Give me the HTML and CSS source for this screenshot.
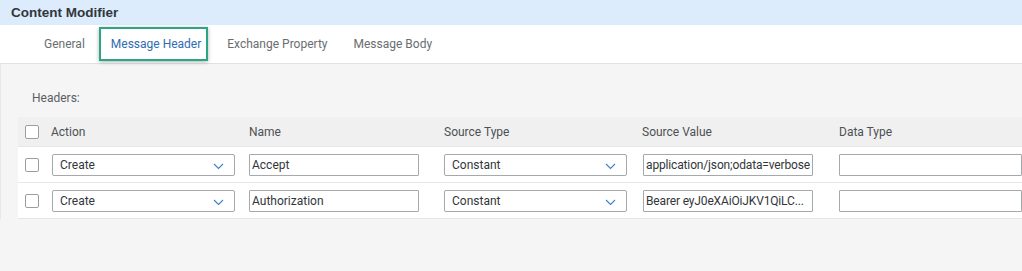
FILE: index.html
```html
<!DOCTYPE html>
<html lang="en">
<head>
    <meta charset="UTF-8">
    <meta name="viewport" content="width=device-width, initial-scale=1.0">
    <title>Content Modifier</title>
    <link rel="stylesheet" href="styles.css">
</head>
<body>
    <div class="titlebar">Content Modifier</div>

    <div class="tabs">
        <span class="tab">General</span>
        <span class="tab active">Message Header</span>
        <span class="tab">Exchange Property</span>
        <span class="tab">Message Body</span>
    </div>

    <div class="content">
        <div class="section-label">Headers:</div>

        <div class="table">
            <div class="row head">
                <div class="cell check"><span class="checkbox"></span></div>
                <div class="cell">Action</div>
                <div class="cell">Name</div>
                <div class="cell">Source Type</div>
                <div class="cell">Source Value</div>
                <div class="cell">Data Type</div>
            </div>
            <div class="row">
                <div class="cell check"><span class="checkbox"></span></div>
                <div class="cell">
                    <div class="select w-action">Create
                        <svg class="chevron" width="11" height="7" viewBox="0 0 11 7"><path d="M1 1 L5.5 5.5 L10 1" fill="none" stroke="#3f7fc6" stroke-width="1.1"/></svg>
                    </div>
                </div>
                <div class="cell"><div class="input w-name">Accept</div></div>
                <div class="cell">
                    <div class="select w-type">Constant
                        <svg class="chevron" width="11" height="7" viewBox="0 0 11 7"><path d="M1 1 L5.5 5.5 L10 1" fill="none" stroke="#3f7fc6" stroke-width="1.1"/></svg>
                    </div>
                </div>
                <div class="cell"><div class="input w-value">application/json;odata=verbose</div></div>
                <div class="cell"><div class="input w-data"></div></div>
            </div>
            <div class="row">
                <div class="cell check"><span class="checkbox"></span></div>
                <div class="cell">
                    <div class="select w-action">Create
                        <svg class="chevron" width="11" height="7" viewBox="0 0 11 7"><path d="M1 1 L5.5 5.5 L10 1" fill="none" stroke="#3f7fc6" stroke-width="1.1"/></svg>
                    </div>
                </div>
                <div class="cell"><div class="input w-name">Authorization</div></div>
                <div class="cell">
                    <div class="select w-type">Constant
                        <svg class="chevron" width="11" height="7" viewBox="0 0 11 7"><path d="M1 1 L5.5 5.5 L10 1" fill="none" stroke="#3f7fc6" stroke-width="1.1"/></svg>
                    </div>
                </div>
                <div class="cell"><div class="input w-value">Bearer eyJ0eXAiOiJKV1QiLC...</div></div>
                <div class="cell"><div class="input w-data"></div></div>
            </div>
        </div>
    </div>
</body>
</html>
```

FILE: styles.css
```css
body {
    margin: 0;
    width: 1022px;
    height: 271px;
    overflow: hidden;
    font-family: Roboto, "Liberation Sans", Arial, sans-serif;
    font-size: 12px;
    color: #32363a;
    background: #f5f5f5;
}
.titlebar {
    height: 25px;
    line-height: 25px;
    padding-left: 11px;
    background: #dcecfc;
    font-family: "Liberation Sans", Arial, sans-serif;
    font-size: 13.5px;
    font-weight: bold;
    color: #32363a;
}
.tabs {
    height: 38px;
    display: flex;
    align-items: center;
    padding-left: 31px;
    background: white;
    border-bottom: 1px solid #e2e2e2;
}
.tab {
    position: relative;
    padding: 0 13px;
    color: #6a6d70;
}
.tab.active {
    color: #2f6cb3;
}
.tab.active::after {
    content: "";
    position: absolute;
    left: 1px;
    right: 6px;
    top: -10px;
    bottom: -10px;
    border: 2px solid #2ba584;
    box-shadow: 0 1px 4px rgba(0,0,0,0.3);
}
.content {
    padding: 27px 0 0 17px;
    border-left: 1px solid #e8e8e8;
}
.section-label {
    padding-left: 14px;
    height: 26px;
    color: #5b5e61;
}
.table {
    border-bottom: 1px solid #e5e5e5;
}
.row {
    display: grid;
    grid-template-columns: 33px 198px 195px 198px 197px 1fr;
    align-items: center;
    height: 35px;
    background: white;
    border-top: 1px solid #e8e8e8;
}
.row.head {
    height: 29px;
    background: #f0f0f0;
    border-top: none;
    color: #4d5054;
}
.cell.check {
    padding-left: 7px;
}
.checkbox {
    display: block;
    width: 12px;
    height: 12px;
    border: 1px solid #9a9ea3;
    border-radius: 2px;
    background: white;
}
.select, .input {
    box-sizing: border-box;
    height: 22px;
    line-height: 20px;
    border: 1px solid #a4a9ae;
    background: white;
    white-space: nowrap;
    overflow: hidden;
}
.select {
    position: relative;
    padding-left: 7px;
    border-radius: 2px;
}
.input {
    padding-left: 2px;
    border-radius: 1px;
}
.chevron {
    position: absolute;
    right: 10px;
    top: 8px;
}
.w-action {
    width: 183px;
    margin-left: 1px;
}
.w-name {
    width: 170px;
}
.w-type {
    width: 183px;
}
.w-value {
    width: 170px;
    margin-left: 1px;
    letter-spacing: -0.15px;
}
.w-data {
    width: 183px;
}
```
